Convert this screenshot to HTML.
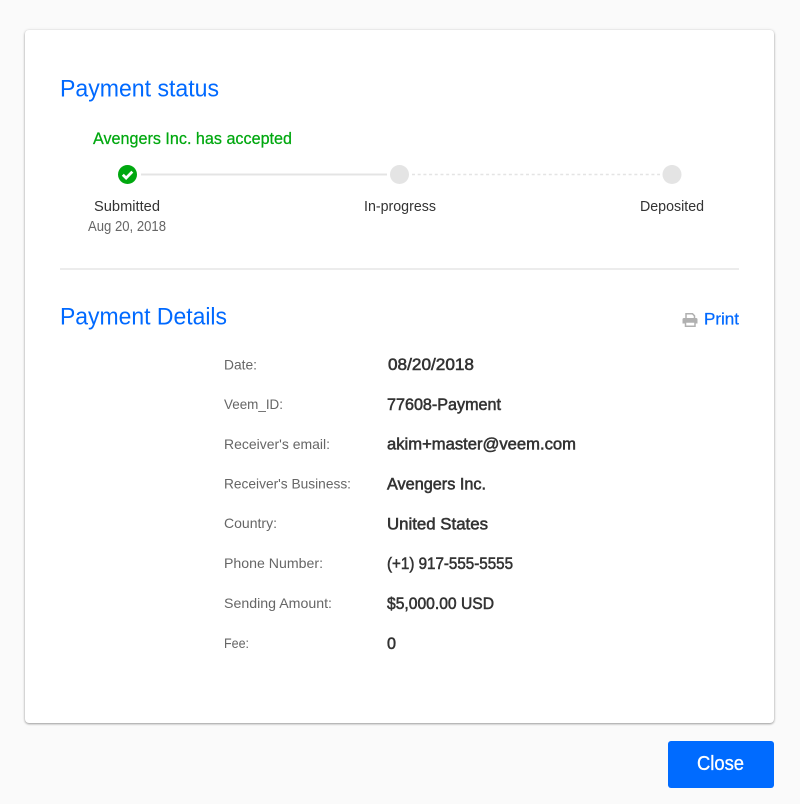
<!DOCTYPE html>
<html lang="en">
<head>
<meta charset="utf-8">
<title>Payment status</title>
<style>
html,body{margin:0;padding:0;width:800px;height:804px;overflow:hidden;background:#fafafa}
.card{position:absolute;left:25px;top:30px;width:749px;height:693px;background:#fff;border-radius:4px;box-shadow:0 1px 2px rgba(0,0,0,.35),0 0 3px rgba(0,0,0,.1)}
.btn{position:absolute;left:668px;top:741px;width:106px;height:47px;background:#006bff;border-radius:3px}
svg{position:absolute;left:0;top:0}
text{font-family:"Liberation Sans",sans-serif}
.h{font-size:24px;fill:#0069ff}
.s{font-size:14.500px;fill:#333}
.l{font-size:14px;fill:#666}
.v{font-size:16.500px;fill:#333;stroke:#333;stroke-width:.55px}
</style>
</head>
<body>
<div class="card"></div>
<div class="btn"></div>
<svg width="800" height="804" viewBox="0 0 800 804" xmlns="http://www.w3.org/2000/svg">
<text class="h" x="60" y="96.500" textLength="159" lengthAdjust="spacingAndGlyphs">Payment status</text>
<text x="93" y="144" font-size="16.500" fill="#00a80f" stroke="#00a80f" stroke-width=".25" textLength="199" lengthAdjust="spacingAndGlyphs">Avengers Inc. has accepted</text>

<line x1="141" y1="174.500" x2="387" y2="174.500" stroke="#e4e4e4" stroke-width="2"/>
<line x1="412" y1="174.500" x2="660" y2="174.500" stroke="#e4e4e4" stroke-width="1.500" stroke-dasharray="3 2.700"/>
<circle cx="127.500" cy="174.500" r="9.500" fill="#00a80f"/>
<path d="M122.800 174.800l3.300 3.200 6.200-6.300" fill="none" stroke="#fff" stroke-width="2.800"/>
<circle cx="399.500" cy="174.500" r="9.500" fill="#e4e4e4"/>
<circle cx="672" cy="174.500" r="9.500" fill="#e4e4e4"/>

<text class="s" x="94" y="211" textLength="66" lengthAdjust="spacingAndGlyphs">Submitted</text>
<text class="s" x="88" y="231" style="fill:#666" textLength="78" lengthAdjust="spacingAndGlyphs">Aug 20, 2018</text>
<text class="s" x="364" y="211" textLength="72" lengthAdjust="spacingAndGlyphs">In-progress</text>
<text class="s" x="640" y="211" textLength="64" lengthAdjust="spacingAndGlyphs">Deposited</text>

<rect x="60" y="268" width="679" height="2" fill="#ececec"/>

<text class="h" x="60" y="324.500" textLength="167" lengthAdjust="spacingAndGlyphs">Payment Details</text>
<path d="M685 318h11a1.500 1.500 0 0 1 1.500 1.500v4h-3v-1.500h-9.500v1.500h-2.500v-4a1.500 1.500 0 0 1 1.500-1.500z" fill="#b0b0b0"/>
<path d="M686 318v-4.200h6.500l2 2v2.200M685.500 322h9.500v4.300h-9.500z" fill="none" stroke="#b0b0b0" stroke-width="1.500"/>
<text x="704" y="324.500" font-size="16.500" fill="#0069ff" stroke="#0069ff" stroke-width=".25" textLength="35" lengthAdjust="spacingAndGlyphs">Print</text>

<text class="l" x="224" y="369.500" textLength="33" lengthAdjust="spacingAndGlyphs">Date:</text>
<text class="v" x="388" y="370" textLength="86" lengthAdjust="spacingAndGlyphs">08/20/2018</text>
<text class="l" x="224" y="409" textLength="59" lengthAdjust="spacingAndGlyphs">Veem_ID:</text>
<text class="v" x="387" y="410" textLength="114" lengthAdjust="spacingAndGlyphs">77608-Payment</text>
<text class="l" x="224" y="449" textLength="106" lengthAdjust="spacingAndGlyphs">Receiver's email:</text>
<text class="v" x="387" y="449.500" textLength="189" lengthAdjust="spacingAndGlyphs">akim+master@veem.com</text>
<text class="l" x="224" y="488.500" textLength="127" lengthAdjust="spacingAndGlyphs">Receiver's Business:</text>
<text class="v" x="387" y="489.500" textLength="99" lengthAdjust="spacingAndGlyphs">Avengers Inc.</text>
<text class="l" x="224" y="528" textLength="53" lengthAdjust="spacingAndGlyphs">Country:</text>
<text class="v" x="387" y="529.500" textLength="101" lengthAdjust="spacingAndGlyphs">United States</text>
<text class="l" x="224" y="568" textLength="99" lengthAdjust="spacingAndGlyphs">Phone Number:</text>
<text class="v" x="387" y="569" textLength="126" lengthAdjust="spacingAndGlyphs">(+1) 917-555-5555</text>
<text class="l" x="224" y="608" textLength="108" lengthAdjust="spacingAndGlyphs">Sending Amount:</text>
<text class="v" x="387" y="609" textLength="107" lengthAdjust="spacingAndGlyphs">$5,000.00 USD</text>
<text class="l" x="224" y="648" textLength="25" lengthAdjust="spacingAndGlyphs">Fee:</text>
<text class="v" x="387" y="649" textLength="9" lengthAdjust="spacingAndGlyphs">0</text>

<text x="697" y="770" font-size="20" fill="#fff" stroke="#fff" stroke-width=".3" textLength="47" lengthAdjust="spacingAndGlyphs">Close</text>
</svg>
</body>
</html>
